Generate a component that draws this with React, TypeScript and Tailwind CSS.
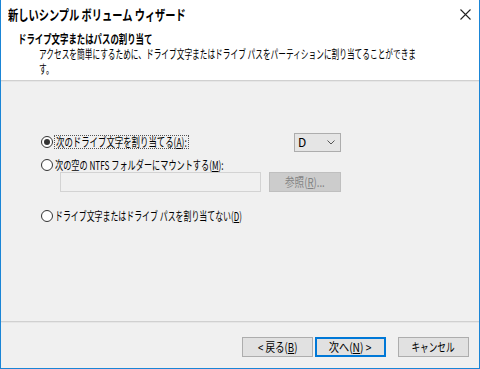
const Radio = ({ checked }: { checked?: boolean }) => (
  <span className="flex h-[12px] w-[12px] shrink-0 items-center justify-center rounded-full border border-[#333333] bg-white">
    {checked && <span className="h-[6px] w-[6px] rounded-full bg-[#333333]" />}
  </span>
);

// Windows' UI font has narrow kana; squeeze Noto's full-width glyphs to the same run length
const Narrow = ({ children, className = "" }: { children: React.ReactNode; className?: string }) => (
  <span className={`inline-block origin-left whitespace-nowrap ${className}`}>{children}</span>
);

const Btn = ({ children, primary }: { children: React.ReactNode; primary?: boolean }) => (
  <button
    className={`flex h-[20px] w-[71px] items-center justify-center overflow-hidden bg-[#e1e1e1] text-[12px] text-black ${
      primary ? "border-2 border-[#0078d7]" : "border border-[#adadad]"
    }`}
  >
    {children}
  </button>
);

export default function App() {
  return (
    <div className="flex h-[369px] w-[480px] flex-col overflow-hidden border-x border-b border-[#1a85d6] bg-[#f0f0f0] font-['Noto_Sans_CJK_JP',sans-serif] text-black">
      {/* title + header */}
      <div className="h-[80px] bg-white">
        <div className="flex h-[28px] items-center justify-between pl-[7px] pr-[7px]">
          <Narrow className="scale-x-[0.73] text-[14px] font-bold">新しいシンプル ボリューム ウィザード</Narrow>
          <svg width="11" height="11" viewBox="0 0 11 11" className="mr-[1px]">
            <path d="M0.5 0.5 L10.5 10.5 M10.5 0.5 L0.5 10.5" stroke="#222" strokeWidth="1.1" />
          </svg>
        </div>
        <div className="pl-[17px] pt-[3px] text-[12px] leading-[15px]">
          <Narrow className="scale-x-[0.7] font-bold">ドライブ文字またはパスの割り当て</Narrow>
          <div className="pl-[21px]">
            <div className="w-[592px] origin-left scale-x-[0.64]">
              アクセスを簡単にするために、ドライブ文字またはドライブ パスをパーティションに割り当てることができます。
            </div>
          </div>
        </div>
      </div>
      <div className="h-[1px] bg-[#d0d0d0]" />
      <div className="h-[1px] bg-[#e6e6e6]" />

      {/* body */}
      <div className="flex-1 pl-[40px] pr-[138px] pt-[50px] text-[12px]">
        <div className="flex h-[20px] items-center justify-between">
          <div className="flex items-center gap-[1px]">
            <Radio checked />
            <span className="h-[14px] w-[135px] border border-dotted border-[#555] pl-[1px] leading-[12px]">
              <Narrow className="scale-x-[0.7]">
                次のドライブ文字を割り当てる(<u>A</u>):
              </Narrow>
            </span>
          </div>
          <div className="flex h-[19px] w-[47px] items-center justify-between border border-[#adadad] bg-[#e5e5e5] pl-[3px] pr-[5px]">
            <span>D</span>
            <svg width="8" height="5" viewBox="0 0 8 5">
              <path d="M0.5 0.5 L4 4 L7.5 0.5" fill="none" stroke="#555" strokeWidth="1" />
            </svg>
          </div>
        </div>
        <div className="mt-[3px] flex h-[20px] items-center gap-[2px]">
          <Radio />
          <Narrow className="scale-x-[0.68] leading-[14px]">
            次の空の NTFS フォルダーにマウントする(<u>M</u>):
          </Narrow>
        </div>
        <div className="ml-[19px] mt-[-3px] flex gap-[8px]">
          <div className="h-[20px] w-[202px] border border-[#d3d3d3] bg-[#f0f0f0]" />
          <button className="flex h-[20px] w-[72px] items-center justify-center border border-[#bfbfbf] bg-[#cccccc] text-[12px] text-[#838383]">
            <span className="inline-block scale-x-[0.8]">
              参照(<u>R</u>)...
            </span>
          </button>
        </div>
        <div className="mt-[14px] flex h-[20px] items-center gap-[2px]">
          <Radio />
          <Narrow className="scale-x-[0.66] leading-[14px]">
            ドライブ文字またはドライブ パスを割り当てない(<u>D</u>)
          </Narrow>
        </div>
      </div>

      {/* footer */}
      <div className="h-[1px] bg-[#d0d0d0]" />
      <div className="h-[1px] bg-[#e6e6e6]" />
      <div className="flex h-[45px] items-start justify-end pr-[10px] pt-[14px]">
        <Btn>
          <span className="inline-block whitespace-nowrap scale-x-[0.8]">&lt; 戻る(<u>B</u>)</span>
        </Btn>
        <div className="ml-[2px]">
          <Btn primary>
            <span className="inline-block whitespace-nowrap scale-x-[0.85]">次へ(<u>N</u>) &gt;</span>
          </Btn>
        </div>
        <div className="ml-[12px]">
          <Btn>
            <span className="inline-block whitespace-nowrap scale-x-[0.72]">キャンセル</span>
          </Btn>
        </div>
      </div>
    </div>
  );
}
